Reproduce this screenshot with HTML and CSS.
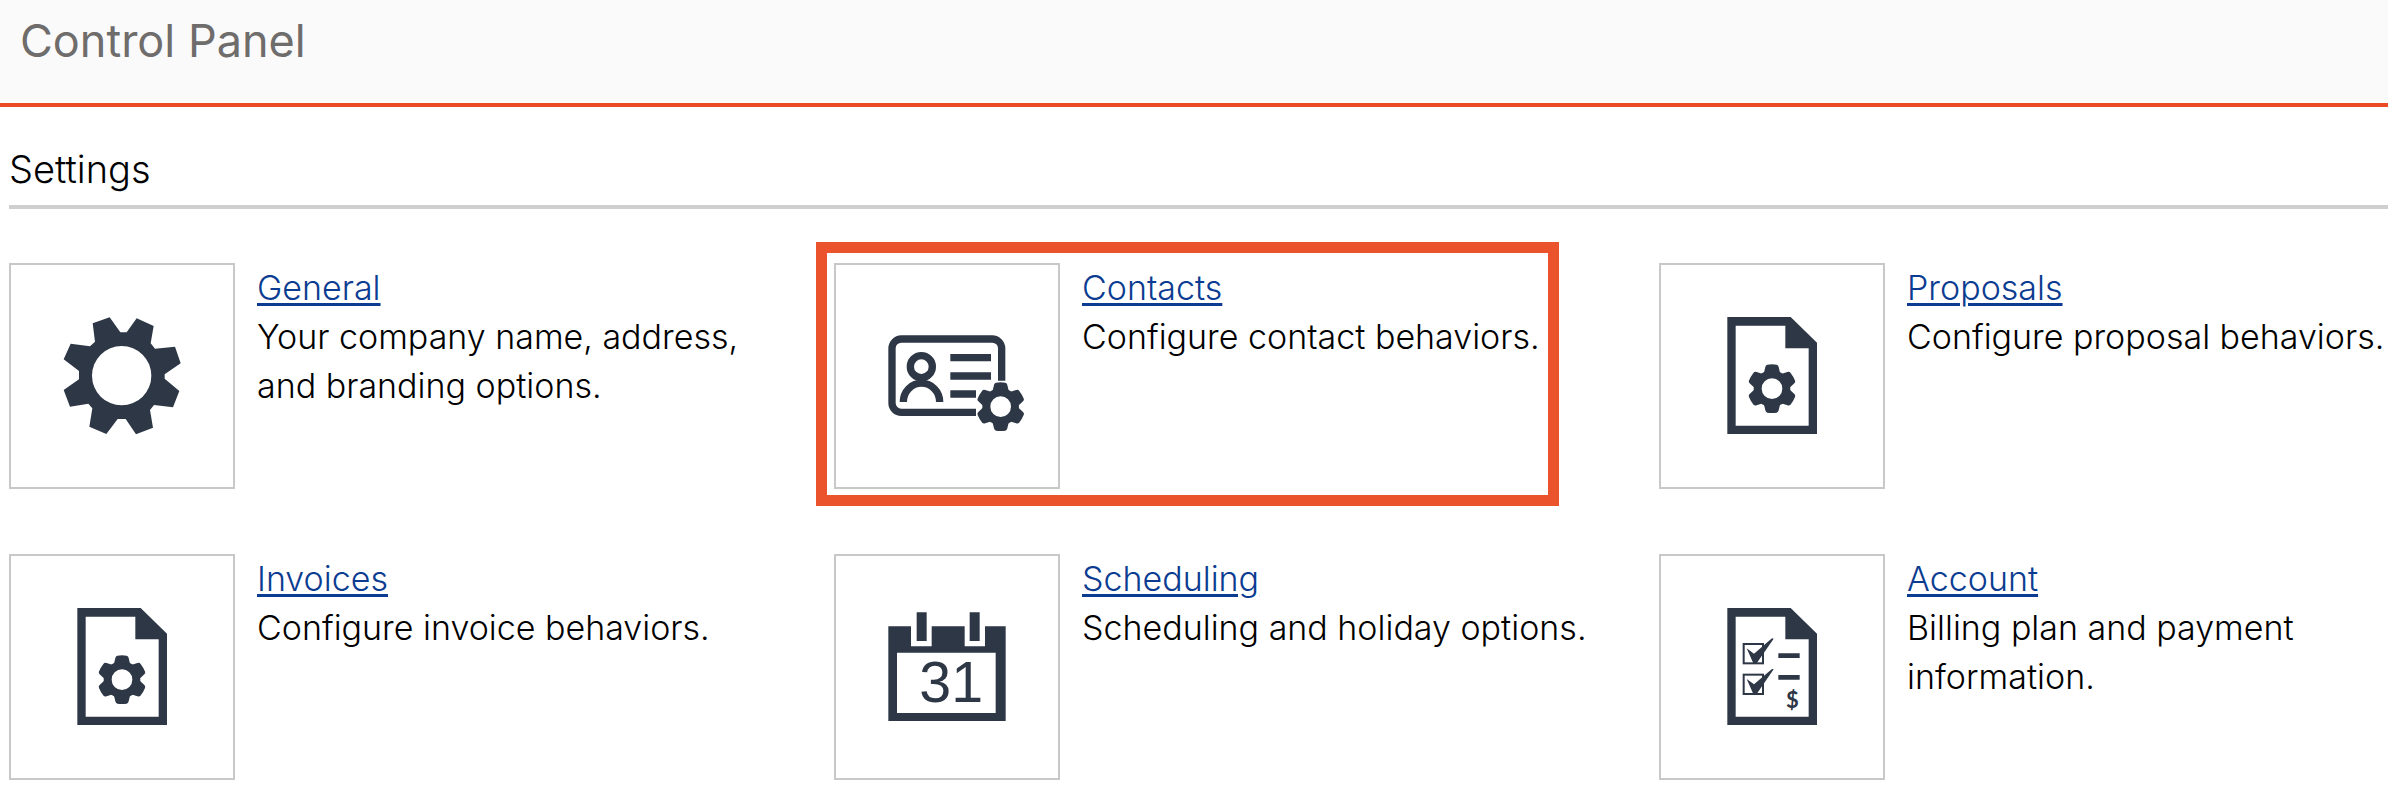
FILE: index.html
```html
<!DOCTYPE html>
<html lang="en">
<head>
<meta charset="utf-8">
<title>Control Panel</title>
<link rel="stylesheet" href="styles.css">
</head>
<body>
<!-- shapes shared by several icons -->
<svg class="defs" aria-hidden="true">
  <defs>
    <path id="tooth" d="M-24 -48 L-20 -65 Q-19 -71 -14 -72 Q0 -74 14 -72 Q19 -71 20 -65 L24 -48 Z" />
    <g id="cog">
      <circle r="43" fill="none" stroke="#2d3745" stroke-width="24" />
      <use href="#tooth" />
      <use href="#tooth" transform="rotate(60)" />
      <use href="#tooth" transform="rotate(120)" />
      <use href="#tooth" transform="rotate(180)" />
      <use href="#tooth" transform="rotate(240)" />
      <use href="#tooth" transform="rotate(300)" />
    </g>
    <path id="page" fill-rule="evenodd" d="M232 204 H422 L501 281 V555 H232 Z M257 230 V530 H476 V298 H406 V230 Z" />
    <g id="check">
      <rect x="281" y="312" width="58" height="58" fill="none" stroke="#2d3745" stroke-width="6" />
      <path d="M290 325 L312 341 L366 295 L371 296 L320 370 L310 370 Z" />
    </g>
  </defs>
</svg>

<header class="header">
  <h1>Control Panel</h1>
</header>

<main class="content">
  <h2>Settings</h2>
  <div class="settings">
    <div class="item">
      <div class="icon">
        <svg viewBox="33 45 666 666" aria-hidden="true">
          <path d="M278 220 L329 202 L361 247 H380 L410 205 L461 228 L452 280 L465 296 L525 290 L542 340 L494 373 V386 L538 423 L519 472 L462 465 L450 480 L459 533 L408 553 L377 507 H353 L319 552 L268 530 L277 475 L265 461 L210 470 L191 420 L237 388 V363 L191 328 L212 281 L270 289 L285 275 Z" />
          <circle cx="365" cy="377" r="89" fill="#fff" />
        </svg>
      </div>
      <div class="info">
        <a href="#general">General</a>
        <p>Your company name, address, and branding options.</p>
      </div>
    </div>

    <div class="item highlight">
      <div class="icon">
        <svg viewBox="109 105 666 666" aria-hidden="true">
          <g fill="none" stroke="#2d3745" stroke-width="22">
            <path d="M606 452 V355 A28 28 0 0 0 578 327 H305 A28 28 0 0 0 277 355 V519 A28 28 0 0 0 305 547 H529" />
            <circle cx="365" cy="410" r="33" />
            <path d="M311 516 A54 56 0 0 1 420 516" />
            <path d="M452 383 H574 M452 438 H574 M452 492 H529" />
          </g>
          <use href="#cog" transform="translate(603 530)" />
        </svg>
      </div>
      <div class="info">
        <a href="#contacts">Contacts</a>
        <p>Configure contact behaviors.</p>
      </div>
    </div>

    <div class="item">
      <div class="icon">
        <svg viewBox="33 48 666 666" aria-hidden="true">
          <use href="#page" />
          <use href="#cog" transform="translate(366 419)" />
        </svg>
      </div>
      <div class="info">
        <a href="#proposals">Proposals</a>
        <p>Configure proposal behaviors.</p>
      </div>
    </div>

    <div class="item">
      <div class="icon">
        <svg viewBox="33 48 666 666" aria-hidden="true">
          <use href="#page" />
          <use href="#cog" transform="translate(366 419)" />
        </svg>
      </div>
      <div class="info">
        <a href="#invoices">Invoices</a>
        <p>Configure invoice behaviors.</p>
      </div>
    </div>

    <div class="item">
      <div class="icon">
        <svg viewBox="48 48 666 666" aria-hidden="true">
          <path fill-rule="evenodd" d="M205 259 H273 V319 H335 V259 H434 V319 H495 V259 H557 V543 H205 Z M231 338 V519 H527 V338 Z" />
          <path d="M290 217 H320 V303 H290 Z M449 217 H479 V303 H449 Z" />
          <text class="day" x="298" y="486">31</text>
        </svg>
      </div>
      <div class="info">
        <a href="#scheduling">Scheduling</a>
        <p>Scheduling and holiday options.</p>
      </div>
    </div>

    <div class="item">
      <div class="icon">
        <svg viewBox="33 48 666 666" aria-hidden="true">
          <use href="#page" />
          <use href="#check" />
          <use href="#check" y="92" />
          <path d="M385 340 H449 V354 H385 Z M385 405 H449 V419 H385 Z" />
          <text class="dollar" x="408" y="504">$</text>
        </svg>
      </div>
      <div class="info">
        <a href="#account">Account</a>
        <p>Billing plan and payment information.</p>
      </div>
    </div>
  </div>
</main>
</body>
</html>
```
FILE: styles.css
```css
body {
  margin: 0;
  background-color: #fff;
  color: #000;
  font-family: Inter, "Liberation Sans", sans-serif;
  font-size: 34px;
  font-weight: 300;
  line-height: 49px;
  overflow-x: hidden;
}
h1, h2, p {
  margin: 0;
  font-weight: 300;
}
.defs {
  display: block;
  width: 0;
  height: 0;
}
.header {
  padding: 11px 20px 32px;
  background-color: #fafafa;
  border-bottom: 4px solid #ec4a26;
}
h1 {
  color: #6f6c6c;
  font-size: 45px;
  font-weight: 400;
  line-height: 60px;
}
.content {
  padding: 38px 0 12px 9px;
}
h2 {
  padding-bottom: 12px;
  border-bottom: 4px solid #cfcfcf;
  font-size: 38px;
  line-height: 48px;
}
/* the last column runs a little past the edge of the page */
.settings {
  display: grid;
  grid-template-columns: repeat(3, 1fr);
  gap: 65px 60px;
  margin-top: 54px;
  margin-right: -36px;
}
.item {
  display: flex;
  align-items: flex-start;
  gap: 22px;
  position: relative;
}
.icon {
  flex: none;
  width: 222px;
  height: 222px;
  border: 2px solid #c8c8c8;
}
.icon svg {
  display: block;
  width: 100%;
  height: 100%;
  fill: #2d3745;
}
.day {
  font-family: "Liberation Sans", sans-serif;
  font-size: 172px;
  font-weight: 400;
}
.dollar {
  font-family: Lato, sans-serif;
  font-size: 66px;
  font-weight: 700;
}
a {
  color: #0b3c91;
  text-decoration-thickness: 3px;
  text-underline-offset: 3px;
}
.highlight::after {
  content: "";
  position: absolute;
  top: -21px;
  right: 40px;
  bottom: -17px;
  left: -18px;
  border: 11px solid #eb532d;
  pointer-events: none;
}
```
